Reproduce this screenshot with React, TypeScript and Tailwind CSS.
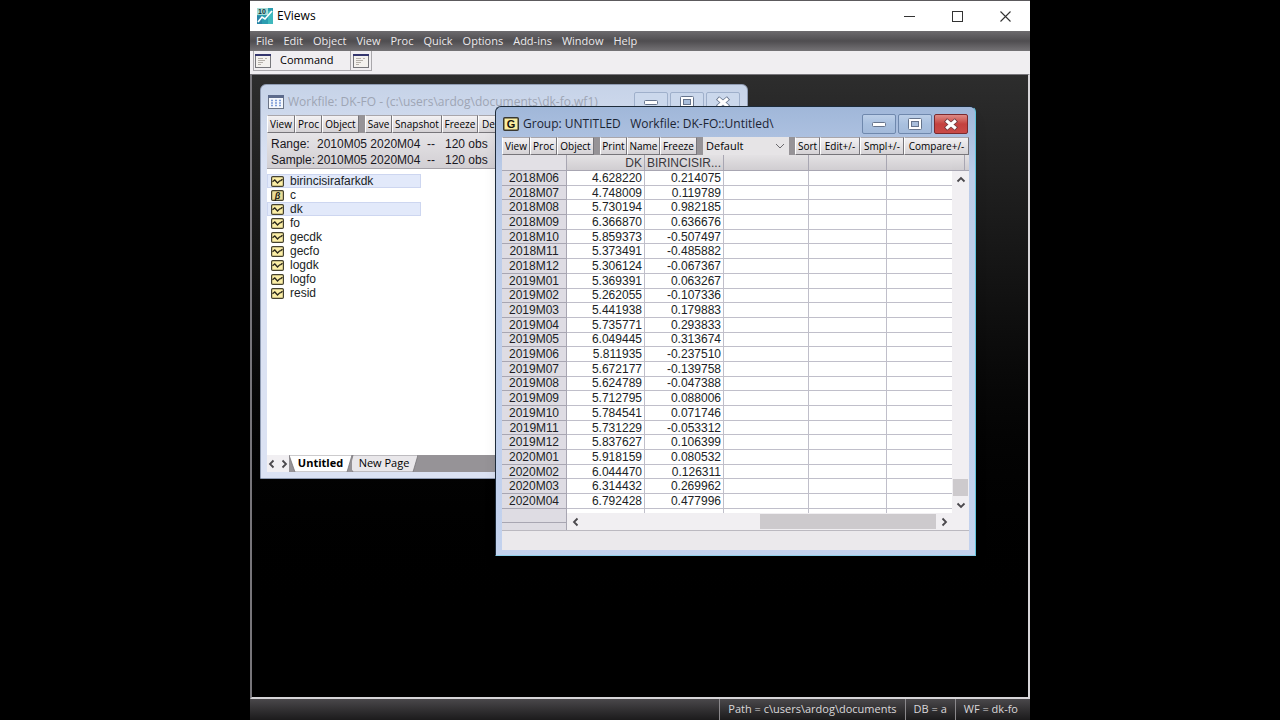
import type { ReactNode } from "react";

const menus = ["File", "Edit", "Object", "View", "Proc", "Quick", "Options", "Add-ins", "Window", "Help"];

const rows: [string, string, string][] = [
  ["2018M06", "4.628220", "0.214075"],
  ["2018M07", "4.748009", "0.119789"],
  ["2018M08", "5.730194", "0.982185"],
  ["2018M09", "6.366870", "0.636676"],
  ["2018M10", "5.859373", "-0.507497"],
  ["2018M11", "5.373491", "-0.485882"],
  ["2018M12", "5.306124", "-0.067367"],
  ["2019M01", "5.369391", "0.063267"],
  ["2019M02", "5.262055", "-0.107336"],
  ["2019M03", "5.441938", "0.179883"],
  ["2019M04", "5.735771", "0.293833"],
  ["2019M05", "6.049445", "0.313674"],
  ["2019M06", "5.811935", "-0.237510"],
  ["2019M07", "5.672177", "-0.139758"],
  ["2019M08", "5.624789", "-0.047388"],
  ["2019M09", "5.712795", "0.088006"],
  ["2019M10", "5.784541", "0.071746"],
  ["2019M11", "5.731229", "-0.053312"],
  ["2019M12", "5.837627", "0.106399"],
  ["2020M01", "5.918159", "0.080532"],
  ["2020M02", "6.044470", "0.126311"],
  ["2020M03", "6.314432", "0.269962"],
  ["2020M04", "6.792428", "0.477996"],
];

const series = [
  { name: "birincisirafarkdk", selected: true },
  { name: "c", coef: true },
  { name: "dk", selected: true },
  { name: "fo" },
  { name: "gecdk" },
  { name: "gecfo" },
  { name: "logdk" },
  { name: "logfo" },
  { name: "resid" },
];

function AppIcon() {
  return (
    <svg width="16" height="16" viewBox="0 0 16 16" aria-hidden="true">
      <rect width="16" height="16" fill="#2b9db0" />
      <path d="M0 0h11v7H0z" fill="#a5dcd6" />
      <path d="M0 8h5v8H0z" fill="#2a86a8" />
      <path d="M11 3h5v13h-5z" fill="#3fb8bd" />
      <path d="M1 14l4-5 3 2 7-8" fill="none" stroke="#fff" strokeWidth="1.6" />
      <text x="1" y="6" fontSize="7" fontWeight="700" fill="#12323c" fontFamily="Liberation Sans, sans-serif">10</text>
    </svg>
  );
}

function CommandIcon() {
  return (
    <svg width="16" height="14" viewBox="0 0 16 14" aria-hidden="true">
      <rect x=".5" y=".5" width="15" height="13" fill="#f3f1ee" stroke="#77777c" />
      <path d="M0 0h16v2H0z" fill="#34366e" />
      <path d="M3 4.500h5M3 6.500h7M3 8.500h5M3 10.500h3M10 4.500h2" stroke="#b5b0aa" />
    </svg>
  );
}

function WorkfileIcon() {
  return (
    <svg width="16" height="14" viewBox="0 0 16 14" aria-hidden="true">
      <rect x=".5" y=".5" width="15" height="13" fill="#f4f7fc" stroke="#6b7486" />
      <path d="M0 0h16v3H0z" fill="#5d6b8c" />
      <path d="M3 5.500h2m2 0h2m2 0h2M3 8h2m2 0h2m2 0h2M3 10.500h2m2 0h2m2 0h2" stroke="#7b9bd6" strokeWidth="1.500" />
    </svg>
  );
}

function SeriesIcon() {
  return (
    <svg width="13" height="11" viewBox="0 0 13 11" aria-hidden="true" className="shrink-0">
      <rect x=".6" y=".6" width="11.800" height="9.800" rx="1.200" fill="#fbeea6" stroke="#45412f" strokeWidth="1.200" />
      <path d="M1.500 5.800L3.800 4l2.700 3 2-2 1.300-.4 1.700-1.400" fill="none" stroke="#2a271c" strokeWidth="1.300" />
    </svg>
  );
}

function CoefIcon() {
  return (
    <svg width="13" height="11" viewBox="0 0 13 11" aria-hidden="true" className="shrink-0">
      <rect x=".6" y=".6" width="11.800" height="9.800" rx="1.200" fill="#e9dc98" stroke="#45412f" strokeWidth="1.200" />
      <text x="6.500" y="8.500" textAnchor="middle" fontSize="9" fontWeight="700" fontStyle="italic" fill="#1c1a12" fontFamily="Liberation Sans, sans-serif">β</text>
    </svg>
  );
}

function GroupIcon() {
  return (
    <svg width="16" height="14" viewBox="0 0 16 14" aria-hidden="true">
      <rect x=".75" y=".75" width="14.500" height="12.500" rx="1" fill="#fbeea0" stroke="#3a3830" strokeWidth="1.500" />
      <text x="8" y="11" textAnchor="middle" fontSize="11" fontWeight="700" fill="#15130c" fontFamily="Liberation Sans, sans-serif">G</text>
    </svg>
  );
}

function Chevron({ dir }: { dir: "up" | "down" | "left" | "right" }) {
  const d = {
    up: "M1.500 6.500L5 3l3.500 3.500",
    down: "M1.500 3.500L5 7l3.500-3.500",
    left: "M6.500 1.500L3 5l3.500 3.500",
    right: "M3.500 1.500L7 5 3.500 8.500",
  }[dir];
  return (
    <svg width="10" height="10" viewBox="0 0 10 10" aria-hidden="true">
      <path d={d} fill="none" stroke="#4a484c" strokeWidth="1.800" />
    </svg>
  );
}

function WindowButtons({ active }: { active?: boolean }) {
  const base = active
    ? "border-[#6f88ad] bg-linear-to-b from-[#bccfe8] via-[#a9c0df] to-[#a3bada]"
    : "border-[#9fb0cb] bg-[#cbd8ec]";
  const box = "flex h-5 w-[34px] items-center justify-center rounded-[2px] border";
  return (
    <div className="flex gap-0.5 pr-px">
      <button aria-label="Minimize" className={`${box} ${base}`}>
        <svg width="16" height="12" viewBox="0 0 16 12"><rect x="1.500" y="4.500" width="13" height="4" rx="1" fill="#fff" stroke="#66748c" /></svg>
      </button>
      <button aria-label="Maximize" className={`${box} ${base}`}>
        <svg width="14" height="12" viewBox="0 0 14 12">
          <rect x=".5" y=".5" width="13" height="11" rx="1" fill="#fff" stroke="#66748c" />
          <rect x="3.500" y="3.500" width="7" height="5" fill="#a9bedb" stroke="#66748c" />
        </svg>
      </button>
      <button
        aria-label="Close"
        className={active ? `${box} border-[#7b2a2e] bg-linear-to-b from-[#dd8a85] via-[#c4413f] to-[#c94a47]` : `${box} ${base}`}
      >
        <svg width="16" height="13" viewBox="0 0 16 13">
          <path d="M2.500 2l11 9m0-9l-11 9" stroke={active ? "#6d3a40" : "#66748c"} strokeWidth="4.800" />
          <path d="M3.200 2.500l9.600 8m0-8l-9.600 8" stroke="#fff" strokeWidth="3.200" />
        </svg>
      </button>
    </div>
  );
}

function Tool({ children, w }: { children: ReactNode; w: string }) {
  return (
    <button className={`h-[18px] shrink-0 overflow-hidden border border-t-[#a9a6ab] border-l-white border-r-[#77757a] border-b-[#77757a] bg-linear-to-b from-[#f3f1f3] to-[#d5d2d5] whitespace-nowrap ${w}`}>
      {children}
    </button>
  );
}

const gap = "w-[6px] shrink-0 bg-[#969397]";

function Workfile() {
  return (
    <section className="absolute top-[9px] left-2 flex h-[395px] w-[488px] flex-col rounded-t-md border border-[#8f9bb2] bg-linear-to-b from-[#c6d3e8] to-[#dbe2f3] to-20% px-[6px] pb-[6px]">
      <header className="flex h-[30px] shrink-0 items-center gap-1 pt-1 pl-px text-[12px] text-[#9ea5b4]">
        <WorkfileIcon />
        <h2 className="flex-1 whitespace-nowrap">Workfile: DK-FO - (c:\users\ardog\documents\dk-fo.wf1)</h2>
        <WindowButtons />
      </header>
      <div className="flex shrink-0 overflow-hidden bg-[#969397] text-[10px] leading-4">
        <Tool w="w-[28px]">View</Tool>
        <Tool w="w-[27px]">Proc</Tool>
        <Tool w="w-[37px]">Object</Tool>
        <span className={gap} />
        <Tool w="w-[27px]">Save</Tool>
        <Tool w="w-[50px]">Snapshot</Tool>
        <Tool w="w-[36px]">Freeze</Tool>
        <Tool w="w-[72px] pl-[3px] text-left">De</Tool>
      </div>
      <dl className="grid shrink-0 grid-cols-[46px_110px_18px_auto] border-b border-[#a5a2a8] bg-linear-to-b from-[#e6e4e7] to-[#d2cfd3] px-1 pt-[3px] font-['Liberation_Sans',sans-serif] text-[12px] leading-4 whitespace-nowrap text-[#19171d]">
        <dt>Range:</dt><dd>2010M05 2020M04</dd><dd>--</dd><dd>120 obs</dd>
        <dt>Sample:</dt><dd>2010M05 2020M04</dd><dd>--</dd><dd>120 obs</dd>
      </dl>
      <ul className="flex-1 bg-white pt-[5px] font-['Liberation_Sans',sans-serif] text-[12px] leading-3 text-[#201e24]">
        {series.map((s) => (
          <li
            key={s.name}
            className={`flex h-[14px] w-[154px] items-center gap-[6px] border pl-[3px] ${s.selected ? "border-[#cdd6f0] bg-[#e2e9fa]" : "border-transparent"}`}
          >
            {s.coef ? <CoefIcon /> : <SeriesIcon />}
            <span>{s.name}</span>
          </li>
        ))}
      </ul>
      <nav className="flex h-[17px] shrink-0 bg-[#969397] text-[11px]">
        <div className="flex w-[22px] items-center gap-0.5 bg-[#f1eff2]">
          <button aria-label="Previous page"><Chevron dir="left" /></button>
          <button aria-label="Next page"><Chevron dir="right" /></button>
        </div>
        <button className="relative flex h-[17px] w-[63px] items-center justify-center font-bold">
          <svg className="absolute inset-0" width="63" height="17" viewBox="0 0 63 17" aria-hidden="true">
            <path d="M0 0l6 17h52l5-17z" fill="#fff" stroke="#6e6c70" strokeWidth=".7" />
          </svg>
          <span className="relative">Untitled</span>
        </button>
        <button className="relative flex h-[17px] w-[64px] items-center justify-center">
          <svg className="absolute inset-0" width="66" height="17" viewBox="0 0 66 17" aria-hidden="true">
            <path d="M1 0h65l-5 17H1l-3-5z" fill="#e9e7ea" stroke="#6e6c70" strokeWidth=".7" />
          </svg>
          <span className="relative">New Page</span>
        </button>
      </nav>
    </section>
  );
}

const headCell = "h-4 border-r border-b border-[#a8a6b2] p-0 pr-[2px] text-right font-normal text-[#3a383d]";
const cell = "border-r border-b border-[#c0bfca] p-0 pr-[2px] text-right";

function Group() {
  return (
    <section className="absolute top-[31px] left-[243px] flex w-[481px] flex-col rounded-t-md border border-[#1d2b3a] border-r-[#5fc3dc] border-b-[#8fd0ea] bg-linear-to-b from-[#a0b7d9] via-[#bccce8] via-15% to-[#c3d2ee] px-[6px] pb-[5px] shadow-lg">
      <header className="flex h-[30px] shrink-0 items-center gap-1 pt-1 pl-px text-[12px] text-[#1b2433]">
        <GroupIcon />
        <h2 className="flex-1 whitespace-pre">{"Group: UNTITLED   Workfile: DK-FO::Untitled\\"}</h2>
        <WindowButtons active />
      </header>
      <div className="flex bg-[#dddadd] text-[10px] leading-4">
        <Tool w="w-[28px]">View</Tool>
        <Tool w="w-[27px]">Proc</Tool>
        <Tool w="w-[37px]">Object</Tool>
        <span className={gap} />
        <Tool w="w-[27px]">Print</Tool>
        <Tool w="w-[33px]">Name</Tool>
        <Tool w="w-[37px]">Freeze</Tool>
        <span className={gap} />
        <div className="relative flex-1">
          <select aria-label="Display mode" className="h-[18px] w-full appearance-none bg-[#e6e4e6] pl-[3px] text-[11px]">
            <option>Default</option>
          </select>
          <svg className="pointer-events-none absolute top-[5px] right-1" width="10" height="8" viewBox="0 0 10 8" aria-hidden="true">
            <path d="M1 2l4 4 4-4" fill="none" stroke="#6a686c" />
          </svg>
        </div>
        <span className={gap} />
        <Tool w="w-[25px]">Sort</Tool>
        <Tool w="w-[40px]">Edit+/-</Tool>
        <Tool w="w-[44px]">Smpl+/-</Tool>
        <Tool w="w-[65px]">Compare+/-</Tool>
      </div>
      <div className="flex">
        <table className="h-[358px] flex-1 table-fixed border-separate border-spacing-0 bg-white font-['Liberation_Sans',sans-serif] text-[12px] leading-3 text-[#201e24]">
          <colgroup>
            <col className="w-[65px]" />
            <col className="w-[78px]" />
            <col className="w-[79px]" />
            <col className="w-[85px]" />
            <col className="w-[78px]" />
            <col />
          </colgroup>
          <thead className="bg-linear-to-b from-[#e4e2e4] to-[#cfccd0]">
            <tr>
              <th className={`${headCell} bg-[#e2e0e5]`} />
              <th scope="col" className={headCell}>DK</th>
              <th scope="col" className={headCell}>BIRINCISIR...</th>
              <th className={headCell} />
              <th className={headCell} />
              <th className="border-b border-[#a8a6b2]" />
            </tr>
          </thead>
          <tbody>
            {rows.map(([date, dk, diff]) => (
              <tr key={date}>
                <th scope="row" className="border-r border-b border-[#a8a6b2] bg-[#dedce3] p-0 text-center font-normal">{date}</th>
                <td className={cell}>{dk}</td>
                <td className={cell}>{diff}</td>
                <td className={cell} />
                <td className={cell} />
                <td className="border-b border-[#c0bfca] p-0" />
              </tr>
            ))}
            <tr className="h-1">
              <th className="h-1 border-r border-[#a8a6b2] bg-[#dedce3] p-0" />
              <td className="border-r border-[#c0bfca] p-0" />
              <td className="border-r border-[#c0bfca] p-0" />
              <td className="border-r border-[#c0bfca] p-0" />
              <td className="border-r border-[#c0bfca] p-0" />
              <td className="p-0" />
            </tr>
          </tbody>
        </table>
        <div className="flex w-[17px] flex-col items-center bg-[#f1eff2]">
          <div className="flex h-4 w-full border-b border-[#a8a6b2] bg-linear-to-b from-[#e4e2e4] to-[#cfccd0]">
            <span className="w-[13px] border-r border-[#a8a6b2]" />
          </div>
          <button aria-label="Scroll up" className="flex h-[17px] items-center"><Chevron dir="up" /></button>
          <span className="flex-1" />
          <span className="h-[17px] w-[15px] bg-[#cdcacd]" />
          <button aria-label="Scroll down" className="flex h-[17px] items-center"><Chevron dir="down" /></button>
        </div>
      </div>
      <div className="flex h-[18px] border-b border-[#bbb9c0] bg-[#f1eff2]">
        <div className="w-[65px] border-r border-[#a8a6b2] bg-[#dedce3]"><div className="h-[10px] border-b border-[#a8a6b2]" /></div>
        <div className="flex flex-1 items-center pl-1">
          <button aria-label="Scroll left"><Chevron dir="left" /></button>
          <span className="flex-1" />
          <span className="h-[15px] w-[176px] bg-[#cdcacd]" />
          <button aria-label="Scroll right" className="mr-5 ml-[3px]"><Chevron dir="right" /></button>
        </div>
      </div>
      <footer className="h-[19px] bg-[#ebe9ec]" />
    </section>
  );
}

export default function App() {
  return (
    <div className="min-h-screen bg-black px-[250px] font-['Open_Sans','Noto_Sans',sans-serif] text-black">
      <main className="flex min-h-screen flex-col border-t border-[#5c5a5d]">
        <header className="flex h-[30px] items-center gap-1 bg-white pr-px pl-[7px] text-[12px]">
          <AppIcon />
          <h1 className="flex-1">EViews</h1>
          <div className="flex">
            <button aria-label="Minimize" className="flex h-[30px] w-12 items-center justify-center">
              <svg width="11" height="11" viewBox="0 0 11 11"><path d="M0 5.500h11" stroke="#333" /></svg>
            </button>
            <button aria-label="Maximize" className="flex h-[30px] w-12 items-center justify-center">
              <svg width="11" height="11" viewBox="0 0 11 11"><rect x=".5" y=".5" width="10" height="10" fill="none" stroke="#333" /></svg>
            </button>
            <button aria-label="Close" className="flex h-[30px] w-12 items-center justify-center">
              <svg width="11" height="11" viewBox="0 0 11 11"><path d="M.5.5l10 10m0-10l-10 10" stroke="#333" strokeWidth="1.100" /></svg>
            </button>
          </div>
        </header>
        <nav className="flex h-5 items-center gap-2.5 bg-linear-to-b from-[#6d6b6e] via-[#4f4d50] to-[#757376] pl-[6px] text-[11px] text-[#eceaec]">
          {menus.map((m) => (
            <button key={m}>{m}</button>
          ))}
        </nav>
        <div className="flex h-[23px] items-start bg-[#f0eef1] pl-[3px] text-[11px]">
          <button className="flex h-5 w-[98px] items-center gap-[9px] border border-t-0 border-[#a9a7ab] pl-px">
            <CommandIcon />
            Command
          </button>
          <button aria-label="Capture" className="flex h-5 w-[21px] items-center justify-center border border-t-0 border-l-0 border-[#a9a7ab]">
            <CommandIcon />
          </button>
        </div>
        <div className="relative flex-1 border-t border-r-2 border-b-2 border-l-2 border-[#d6d4d7] border-t-[#77757a] border-l-[#77757a] bg-linear-to-b from-[#2d2d2d] to-black to-90%">
          <Workfile />
          <Group />
        </div>
        <footer className="flex h-[21px] items-stretch justify-end bg-linear-to-b from-[#4a484b] to-[#1c1b1c] pr-1 text-[11px] leading-5 whitespace-nowrap text-[#dad8da]">
          <span className="border-l border-[#8a888b] px-2">Path = c\users\ardog\documents</span>
          <span className="border-l border-[#8a888b] px-2">DB = a</span>
          <span className="border-l border-[#8a888b] px-2">WF = dk-fo</span>
        </footer>
      </main>
    </div>
  );
}
